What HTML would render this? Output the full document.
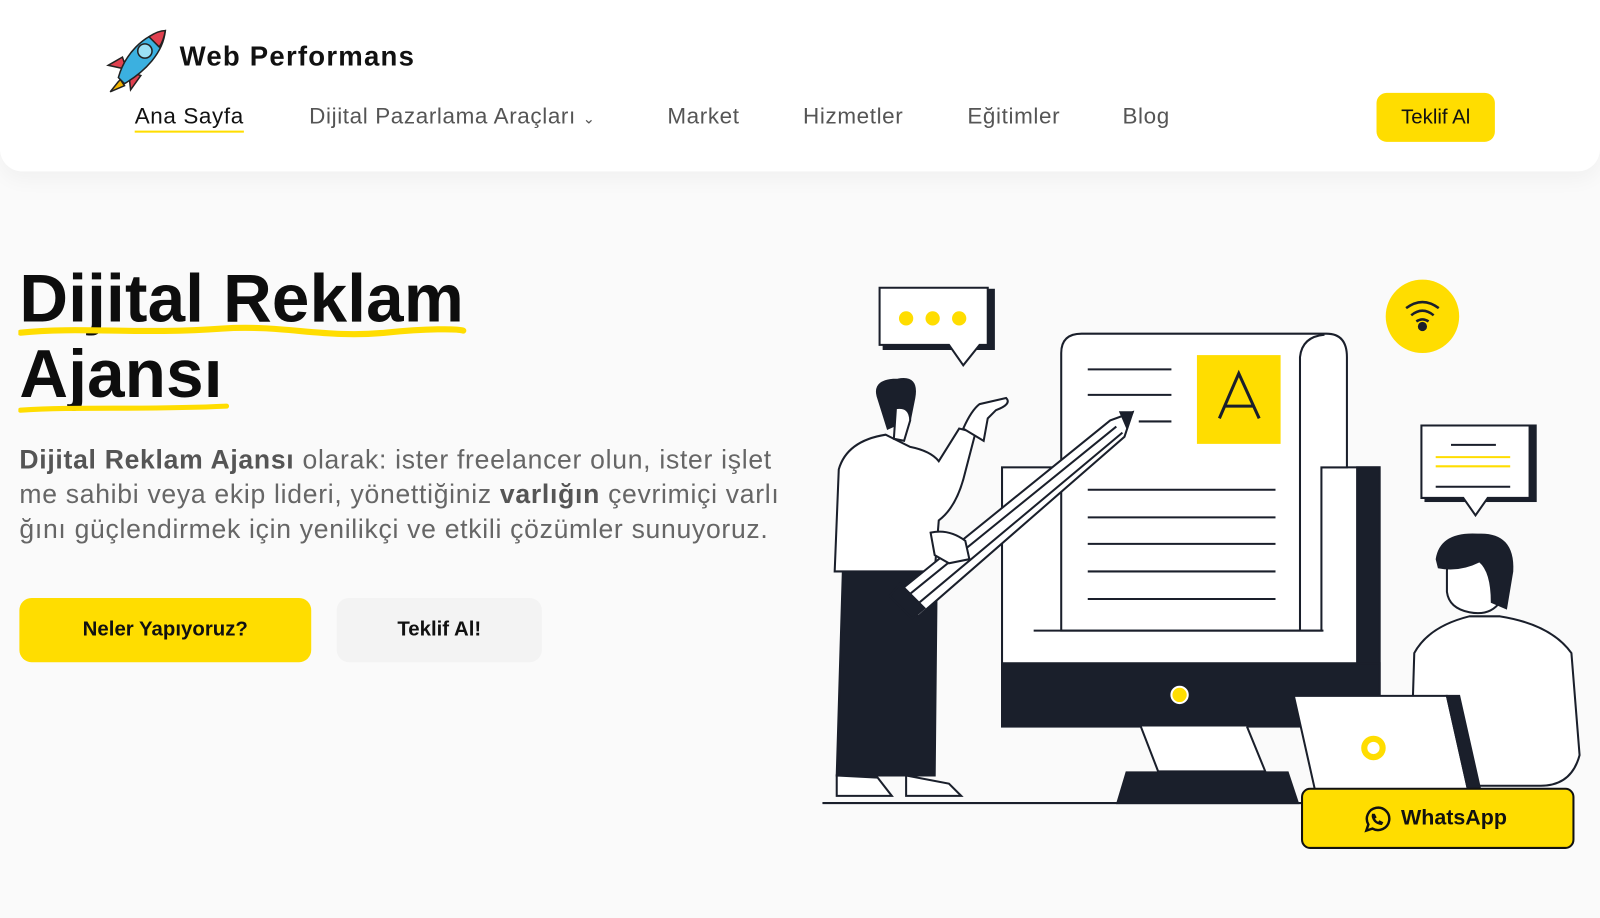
<!DOCTYPE html>
<html><head><meta charset="utf-8"><style>
*{margin:0;padding:0;box-sizing:border-box}
body{width:1600px;height:900px;background:#fafafa;font-family:"Liberation Sans",sans-serif;position:relative;overflow:hidden}
#w{position:absolute;left:0;top:0;width:1568px;height:882px;transform:scale(1.0204);transform-origin:0 0}
.hdr{position:absolute;left:0;top:0;width:1568px;height:168px;background:#fff;border-radius:0 0 22px 22px;box-shadow:0 8px 20px rgba(0,0,0,.04)}
.logo{position:absolute;left:176px;top:40px;font-size:27px;font-weight:bold;color:#111;letter-spacing:1.2px}
.nav{position:absolute;top:101px;font-size:22px;color:#555;letter-spacing:0.6px}
.cta{position:absolute;left:1349px;top:91px;width:116px;height:48px;background:#ffdd00;border-radius:10px;font-size:20px;color:#111;text-align:center;line-height:48px}
h1{position:absolute;left:19px;font-size:66px;font-weight:bold;color:#0d0d0d;letter-spacing:0.2px}
.p{position:absolute;left:19px;font-size:26px;color:#666;letter-spacing:0.7px;white-space:nowrap}
.p b{color:#555}
.b1{position:absolute;left:19px;top:586px;width:286px;height:63px;background:#ffdd00;border-radius:12px;font-weight:bold;font-size:20px;text-align:center;line-height:63px;color:#111}
.b2{position:absolute;left:330px;top:586px;width:201px;height:63px;background:#f3f3f3;border-radius:12px;font-weight:bold;font-size:20px;text-align:center;line-height:63px;color:#111}
.wa{position:absolute;left:1275px;top:772px;width:268px;height:60px;background:#ffdd00;border:2.5px solid #111;border-radius:9px;font-weight:bold;font-size:21px;line-height:55px;color:#111;padding-left:96px}
</style></head><body><div id="w">
<div class="hdr">
<svg style="position:absolute;left:102px;top:28px" width="64" height="64" viewBox="0 0 64 64">
<path d="M14 52 L6 62 L20 56 L16 50Z" fill="#f2b400" stroke="#222" stroke-width="1.5"/>
<path d="M4 36 L18 28 L22 40 Z" fill="#e0404f" stroke="#222" stroke-width="1.5"/>
<path d="M26 60 L36 46 L24 42Z" fill="#e0404f" stroke="#222" stroke-width="1.5"/>
<path d="M14 48 C20 26 38 6 60 2 C58 24 40 42 20 54Z" fill="#3bb0e0" stroke="#222" stroke-width="1.5"/>
<path d="M44 8 C50 4 56 2 60 2 C59 8 57 14 54 18Z" fill="#e0404f" stroke="#222" stroke-width="1.5"/>
<circle cx="40" cy="22" r="7" fill="#9be0f5" stroke="#222" stroke-width="1.5"/>
</svg>
<div class="logo">Web Performans</div>
<div class="nav" style="left:132px;color:#111">Ana Sayfa<div style="height:2px;background:#ffdd00;margin-top:1px"></div></div>
<div class="nav" style="left:303px">Dijital Pazarlama Araçları <span style="font-size:14px">⌄</span></div>
<div class="nav" style="left:654px">Market</div>
<div class="nav" style="left:787px">Hizmetler</div>
<div class="nav" style="left:948px">Eğitimler</div>
<div class="nav" style="left:1100px">Blog</div>
<div class="cta">Teklif Al</div>
</div>

<h1 style="top:254px">Dijital Reklam</h1>
<h1 style="top:328px">Ajansı</h1>
<svg style="position:absolute;left:18px;top:314px" width="440" height="100"><path d="M2 12 C60 6 120 14 200 8 C260 4 300 18 360 12 C400 8 430 8 436 10" stroke="#ffdd00" stroke-width="6" fill="none" stroke-linecap="round"/><path d="M2 88 C60 84 120 88 204 84" stroke="#ffdd00" stroke-width="5" fill="none" stroke-linecap="round"/></svg>
<div class="p" style="top:435px"><b>Dijital Reklam Ajansı</b> olarak: ister freelancer olun, ister işlet</div>
<div class="p" style="top:469px">me sahibi veya ekip lideri, yönettiğiniz <b>varlığın</b> çevrimiçi varlı</div>
<div class="p" style="top:503px">ğını güçlendirmek için yenilikçi ve etkili çözümler sunuyoruz.</div>
<div class="b1">Neler Yapıyoruz?</div>
<div class="b2">Teklif Al!</div>

<svg style="position:absolute;left:0;top:0" width="1600" height="900" fill="none" stroke="#1a1f2b" stroke-width="2">
<rect x="866" y="284" width="108" height="58" fill="#1a1f2b"/>
<path d="M862 282 H968 V338 H960 L944 358 L930 338 H862Z" fill="#fff"/>
<circle cx="888" cy="312" r="7" fill="#ffdd00" stroke="none"/><circle cx="914" cy="312" r="7" fill="#ffdd00" stroke="none"/><circle cx="940" cy="312" r="7" fill="#ffdd00" stroke="none"/>
<ellipse cx="1394" cy="310" rx="36" ry="36" fill="#ffdd00" stroke="none"/>
<path d="M1378 302 Q1394 290 1410 302 M1383 309 Q1394 300 1405 309 M1388 315 Q1394 311 1400 315" stroke-width="2.5"/>
<circle cx="1394" cy="320" r="3.5" fill="#1a1f2b"/>
<rect x="982" y="458" width="370" height="254" fill="#fff"/>
<rect x="1330" y="458" width="22" height="254" fill="#1a1f2b"/>
<rect x="982" y="650" width="370" height="62" fill="#1a1f2b"/>
<circle cx="1156" cy="681" r="8" fill="#ffdd00" stroke="#fff" stroke-width="2"/>
<path d="M1118 712 L1135 756 H1240 L1222 712" fill="#fff"/>
<path d="M1095 787 L1104 757 H1262 L1272 787Z" fill="#1a1f2b"/>
<line x1="806" y1="787" x2="1290" y2="787"/>
<path d="M1040 618 V346 Q1040 327 1060 327 H1300 Q1320 327 1320 350 V458 H1295 V618Z" fill="#fff"/>
<path d="M1274 618 V350 Q1276 330 1298 328"/>
<line x1="1013" y1="618" x2="1297" y2="618"/>
<rect x="1173" y="348" width="82" height="87" fill="#ffdd00" stroke="none"/>
<path d="M1195 410 L1214 366 L1234 410 M1200 398 H1229" stroke-width="3"/>
<path d="M1066 362 H1148 M1066 387 H1148 M1116 413 H1148"/>
<path d="M1066 480 H1250 M1066 507 H1250 M1066 533 H1250 M1066 560 H1250 M1066 587 H1250"/>
<rect x="1397" y="417" width="108" height="74" fill="#1a1f2b"/>
<path d="M1393 417 H1499 V488 H1458 L1446 505 L1434 488 H1393Z" fill="#fff"/>
<path d="M1422 436 H1466 M1407 477 H1480"/>
<path d="M1407 448 H1480 M1407 457 H1480" stroke="#ffdd00"/>
<path d="M820 760 L826 560 H918 L916 760Z" fill="#1a1f2b"/>
<path d="M820 760 V780 H874 L860 762Z M888 760 V780 H942 L930 768Z" fill="#fff"/>
<path d="M818 560 L822 460 Q830 432 868 426 L892 438 Q912 442 920 452 L940 420 L956 424 L944 470 Q936 498 920 510 L916 560Z" fill="#fff"/>
<path d="M944 420 Q952 402 960 396 L986 390 Q992 396 976 402 L968 410 L964 432Z" fill="#fff"/>
<path d="M860 388 Q856 372 880 372 Q900 368 896 390 L892 410 L870 420Z" fill="#1a1f2b"/>
<path d="M878 400 Q892 398 892 412 L886 432 L876 430Z" fill="#fff"/>
<path d="M878 582 L1088 412 L1110 404 L1102 428 L900 604Z" fill="#fff"/>
<path d="M882 590 L1094 418 M892 598 L1100 424"/>
<path d="M1098 404 L1110 404 L1104 418Z" fill="#1a1f2b"/>
<path d="M882 572 L906 596 L894 606 L872 584Z" fill="#1a1f2b"/>
<path d="M912 522 Q930 518 946 530 L950 548 L930 552 L916 544Z" fill="#fff"/>
<path d="M1382 770 L1386 640 Q1400 614 1440 604 L1470 604 Q1520 612 1540 640 L1548 740 Q1540 770 1510 770Z" fill="#fff"/>
<path d="M1418 560 Q1418 534 1448 530 Q1472 530 1472 560 L1470 590 Q1460 604 1440 600 Q1420 596 1418 580Z" fill="#fff"/>
<path d="M1408 548 Q1412 522 1448 524 Q1484 522 1482 560 L1476 596 L1462 590 Q1462 560 1450 550 Q1430 560 1410 556Z" fill="#1a1f2b"/>
<path d="M1268 682 H1418 L1440 780 H1290Z" fill="#fff"/>
<path d="M1418 682 H1430 L1452 780 H1440Z" fill="#1a1f2b"/>
<circle cx="1346" cy="733" r="9" stroke="#ffdd00" stroke-width="6"/>
</svg>

<div class="wa"><svg style="position:absolute;left:58px;top:15px" width="28" height="28" viewBox="0 0 28 28" fill="none" stroke="#111" stroke-width="2.4"><path d="M4 25 L6 19 A11 11 0 1 1 10 23Z"/><path d="M10 9 Q9 12 12 16 Q15 19 19 19 L20 17 L17 15.5 L16 17 Q13 16 12 13 L13.5 12 L12 9Z" fill="#111" stroke-width="1"/></svg>WhatsApp</div>
</div></body></html>
